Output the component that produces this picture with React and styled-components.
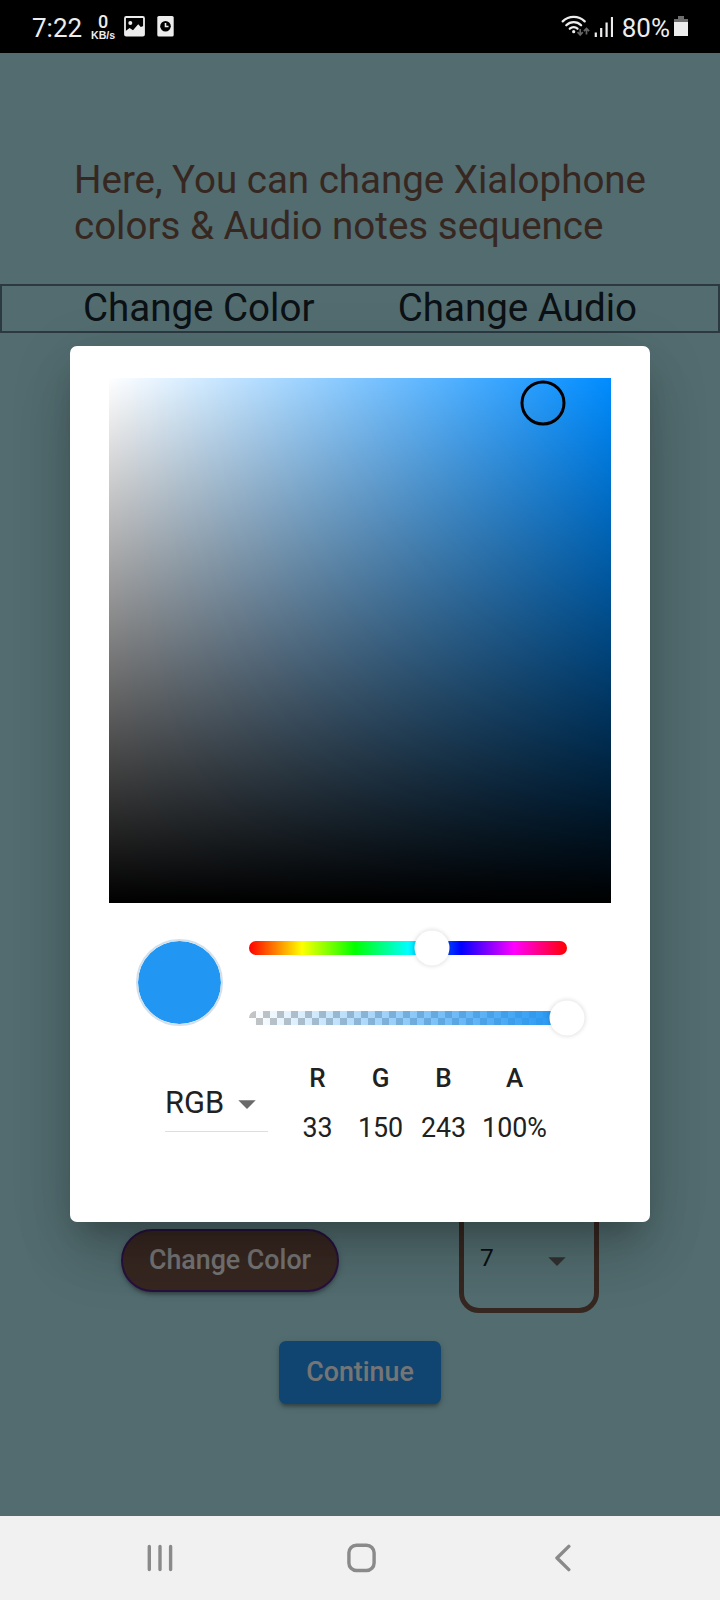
import React from "react";
import styled, { createGlobalStyle } from "styled-components";

const GlobalStyle = createGlobalStyle`
  * { box-sizing: border-box; }
  body { margin: 0; background: #b2ebf2; }
  button { font: inherit; border: 0; padding: 0; }
`;

const Phone = styled.div`
  position: relative;
  display: flex;
  flex-direction: column;
  width: 720px;
  height: 1600px;
  overflow: hidden;
  font-family: Roboto, "Liberation Sans", sans-serif;
`;

/* ---------- status bar ---------- */

const StatusBar = styled.header`
  flex: none;
  display: flex;
  justify-content: space-between;
  height: 53px;
  padding: 11px 32px 0;
  background: #000;
  color: #ededed;
`;

const StatusGroup = styled.div`
  display: flex;
  align-items: flex-start;
`;

const StatusText = styled.span`
  font-size: 26px;
  line-height: 34px;
  white-space: nowrap;
`;

const NetSpeed = styled.div`
  display: flex;
  flex-direction: column;
  align-items: center;
  width: 26px;
  margin: 1px 0 0 8px;
  font-family: "Liberation Sans", sans-serif;
  font-weight: 700;
`;

const SpeedValue = styled.span`
  font-family: Roboto, sans-serif;
  font-size: 18px;
  line-height: 19px;
  font-weight: 500;
`;

const SpeedUnit = styled.span`
  font-size: 10.6px;
  line-height: 8px;
`;

const StatusIcon = styled.svg`
  flex: none;
  display: block;
  margin-top: ${(p) => p.$top}px;
  margin-left: ${(p) => p.$left}px;
`;

/* ---------- settings page ---------- */

const Screen = styled.main`
  position: relative;
  flex: none;
  display: flex;
  flex-direction: column;
  height: 1463px;
  padding-top: 104px;
  background: #b2ebf2;
`;

const Title = styled.h1`
  margin: 0;
  padding-left: 74px;
  font-size: 38.5px;
  line-height: 45.5px;
  font-weight: 400;
  color: #795548;
  white-space: nowrap;
`;

const TableHeader = styled.div`
  display: flex;
  justify-content: space-between;
  height: 49px;
  margin-top: 36px;
  padding: 0 81px 0 81px;
  border: 2px solid #607d8b;
  font-size: 38.5px;
  line-height: 43px;
  color: #18252c;
  white-space: nowrap;
`;

const NoteRow = styled.div`
  display: flex;
  align-items: flex-end;
  justify-content: space-between;
  margin-top: 867px;
  padding: 0 121px;
`;

const Button = styled.button`
  flex: none;
  width: ${(p) => p.$width}px;
  height: 63px;
  font-size: 26.8px;
  line-height: 61px;
  font-weight: 500;
  color: #fff;
  white-space: nowrap;
  box-shadow: 0 4px 3px -2px rgba(0, 0, 0, 0.2), 0 3px 4px rgba(0, 0, 0, 0.14),
    0 2px 9px rgba(0, 0, 0, 0.12);
`;

const ColorButton = styled(Button)`
  margin-bottom: 21px;
  border: 2px solid #58278c;
  border-radius: 32px;
  background: #795548;
  line-height: 57px;
`;

const ContinueButton = styled(Button)`
  align-self: center;
  margin-top: 28px;
  border-radius: 7px;
  background: #2196f3;
`;

const NoteSelect = styled.div`
  display: flex;
  align-items: center;
  justify-content: space-between;
  width: 140px;
  height: 113px;
  padding: 0 28px 0 16px;
  border: 5px solid #795548;
  border-radius: 20px;
  color: #18252c;
`;

const NoteValue = styled.span`
  margin-top: 2px;
  font-size: 24.5px;
  line-height: 30px;
`;

const ArrowDown = styled.svg`
  flex: none;
  display: block;
  width: 18px;
  height: 9px;
  margin-top: ${(p) => p.$drop || 0}px;
`;

/* ---------- modal ---------- */

const Scrim = styled.div`
  position: absolute;
  inset: 0;
  display: flex;
  justify-content: center;
  align-items: flex-start;
  padding-top: 293px;
  background: rgba(0, 0, 0, 0.54);
`;

const Dialog = styled.section`
  width: 580px;
  height: 876px;
  padding: 32px 39px 0;
  border-radius: 7px;
  background: #fff;
  color: #212121;
  box-shadow: 0 19px 26px -12px rgba(0, 0, 0, 0.2),
    0 38px 60px -4px rgba(0, 0, 0, 0.14), 0 14px 64px 2px rgba(0, 0, 0, 0.1);
`;

const Palette = styled.div`
  position: relative;
  width: 502px;
  height: 525px;
  background: linear-gradient(to bottom, rgba(0, 0, 0, 0), #000),
    linear-gradient(to right, #fff, #008cff);
`;

const PaletteCursor = styled.div`
  position: absolute;
  width: 45px;
  height: 45px;
  border: 3px solid #000;
  border-radius: 50%;
  transform: translate(-50%, -50%);
`;

const Controls = styled.div`
  display: flex;
  align-items: center;
  gap: 26px;
  margin-top: 36px;
  padding-left: 27px;
`;

const Swatch = styled.div`
  flex: none;
  width: 87px;
  height: 87px;
  border: 2px solid #d3e0ea;
  border-radius: 50%;
  background: #2196f3;
  background-clip: padding-box;
`;

const Sliders = styled.div`
  display: flex;
  flex-direction: column;
  gap: 56px;
  width: 318px;
`;

const Track = styled.div`
  position: relative;
  height: 14px;
  border-radius: 7px;
`;

const HueTrack = styled(Track)`
  background: linear-gradient(to right, #f00, #ff0, #0f0, #0ff, #00f, #f0f, #f00);
`;

const AlphaTrack = styled(Track)`
  background: linear-gradient(to right, rgba(33, 150, 243, 0), #2196f3),
    repeating-conic-gradient(#fff 0 25%, #c4c4c4 0 50%) 0 0 / 14px 14px;
`;

const Thumb = styled.span`
  position: absolute;
  top: 50%;
  width: 35px;
  height: 35px;
  border-radius: 50%;
  background: #fff;
  transform: translate(-50%, -50%);
  box-shadow: 0 0 4px 1px rgba(0, 0, 0, 0.12);
`;

const ValueRow = styled.div`
  display: flex;
  align-items: flex-start;
  padding: 36px 0 0 56px;
`;

const ModeSelect = styled.div`
  display: flex;
  align-items: center;
  justify-content: space-between;
  width: 103px;
  height: 53px;
  margin-top: 17px;
  padding: 0 12px 5px 0;
  border-bottom: 1.5px solid #dedede;
  font-size: 30.8px;
  line-height: 36px;
`;

const Channels = styled.div`
  display: grid;
  grid-template-columns: 63px 63px 63px 79px;
  margin-left: 18px;
  text-align: center;
`;

const ChannelName = styled.span`
  font-size: 26px;
  line-height: 32px;
  font-weight: 500;
`;

const ChannelValue = styled.span`
  margin-top: 18px;
  font-size: 26.8px;
  line-height: 32px;
`;

/* ---------- navigation bar ---------- */

const NavBar = styled.nav`
  flex: none;
  display: flex;
  justify-content: space-between;
  align-items: flex-start;
  height: 84px;
  padding: 27px 149px 0 147px;
  background: #f1f1f1;
`;

const NavIcon = styled.svg`
  display: block;
  fill: none;
  stroke: #8a8a8a;
  stroke-width: 3.4;
  stroke-linecap: round;
  stroke-linejoin: round;
`;

const CHANNELS = [
  ["R", "33"],
  ["G", "150"],
  ["B", "243"],
  ["A", "100%"],
];

const Caret = ({ color, drop }) => (
  <ArrowDown viewBox="0 0 18 9" $drop={drop}>
    <path d="M0.3 0.3h17.4L9 9z" fill={color} />
  </ArrowDown>
);

function Status() {
  return (
    <StatusBar>
      <StatusGroup>
        <StatusText>7:22</StatusText>
        <NetSpeed>
          <SpeedValue>0</SpeedValue>
          <SpeedUnit>KB/s</SpeedUnit>
        </NetSpeed>
        <StatusIcon $top={5} $left={8} width="21" height="21" viewBox="0 0 21 21">
          <rect x="1" y="1" width="19" height="18.6" rx="1.2" fill="none" stroke="#ededed" strokeWidth="1.8" />
          <circle cx="6.3" cy="7" r="2" fill="#ededed" />
          <path d="M1 15.5l4.6-3.4 3.4 2.2 5.2-6.1 2.6 2.7 3.2-1.2v9.9H1z" fill="#ededed" />
        </StatusIcon>
        <StatusIcon $top={5} $left={12} width="17" height="21" viewBox="0 0 17 21">
          <rect x="0.3" y="0" width="16.4" height="20.6" rx="1.6" fill="#ededed" />
          <circle cx="8.5" cy="10.3" r="5.3" fill="#000" />
          <path d="M8.5 7v3.5h3" fill="none" stroke="#ededed" strokeWidth="1.6" />
        </StatusIcon>
      </StatusGroup>
      <StatusGroup>
        <StatusIcon $top={3} $left={0} width="29" height="24" viewBox="0 0 29 24">
          <g fill="none" stroke="#ededed" strokeWidth="2.3" strokeLinecap="round">
            <path d="M1.7 7.4a15.6 15.6 0 0 1 22 0" />
            <path d="M5.3 11.2a10.6 10.6 0 0 1 14.8 0" />
            <path d="M8.8 14.7a5.8 5.8 0 0 1 7.7 0" />
          </g>
          <circle cx="12.7" cy="17.7" r="1.6" fill="#ededed" />
          <g fill="none" stroke="#666" strokeWidth="1.7">
            <path d="M19.2 15v6M16.6 18.2l2.6 2.8 2.6-2.8" />
            <path d="M25.5 20.5v-6M22.9 17.2l2.6-2.8 2.6 2.8" />
          </g>
        </StatusIcon>
        <StatusIcon $top={5} $left={4} width="19" height="21" viewBox="0 0 19 21">
          <path
            d="M1.8 16.5v4.5M7.2 12v9M12.6 6.5v14.5M18 1v20"
            stroke="#ededed"
            strokeWidth="2.2"
          />
        </StatusIcon>
        <StatusIcon as="span" $top={0} $left={9}>
          <StatusText>80%</StatusText>
        </StatusIcon>
        <StatusIcon $top={4} $left={4} width="14" height="21" viewBox="0 0 14 21">
          <path d="M4 1h6v3h4v4H0V4h4z" fill="#6e6e6e" />
          <path d="M0 7h14v14H0z" fill="#ededed" />
        </StatusIcon>
      </StatusGroup>
    </StatusBar>
  );
}

function ColorPicker() {
  return (
    <Dialog role="dialog">
      <Palette>
        <PaletteCursor style={{ left: "86.4%", top: "4.7%" }} />
      </Palette>
      <Controls>
        <Swatch />
        <Sliders>
          <HueTrack>
            <Thumb style={{ left: "57.4%" }} />
          </HueTrack>
          <AlphaTrack>
            <Thumb style={{ left: "100%" }} />
          </AlphaTrack>
        </Sliders>
      </Controls>
      <ValueRow>
        <ModeSelect>
          RGB
          <Caret color="#6a6a6a" drop={4} />
        </ModeSelect>
        <Channels>
          {CHANNELS.map(([name]) => (
            <ChannelName key={name}>{name}</ChannelName>
          ))}
          {CHANNELS.map(([name, value]) => (
            <ChannelValue key={name}>{value}</ChannelValue>
          ))}
        </Channels>
      </ValueRow>
    </Dialog>
  );
}

export default function App() {
  return (
    <Phone>
      <GlobalStyle />
      <Status />
      <Screen>
        <Title>
          Here, You can change Xialophone
          <br />
          colors &amp; Audio notes sequence
        </Title>
        <TableHeader>
          <span>Change Color</span>
          <span>Change Audio</span>
        </TableHeader>
        <NoteRow>
          <ColorButton $width={218}>Change Color</ColorButton>
          <NoteSelect>
            <NoteValue>7</NoteValue>
            <Caret color="#6c6c6c" drop={9} />
          </NoteSelect>
        </NoteRow>
        <ContinueButton $width={162}>Continue</ContinueButton>
        <Scrim>
          <ColorPicker />
        </Scrim>
      </Screen>
      <NavBar>
        <NavIcon width="26" height="31" viewBox="0 0 26 31">
          <path d="M2.3 3.5v23M13 3.5v23M23.6 3.5v23" />
        </NavIcon>
        <NavIcon width="34" height="31" viewBox="0 0 34 31">
          <rect x="2.9" y="2.3" width="25.2" height="25.2" rx="7.5" />
        </NavIcon>
        <NavIcon width="18" height="31" viewBox="0 0 18 31">
          <path d="M15.8 3.4L4 15l11.8 11.6" />
        </NavIcon>
      </NavBar>
    </Phone>
  );
}
